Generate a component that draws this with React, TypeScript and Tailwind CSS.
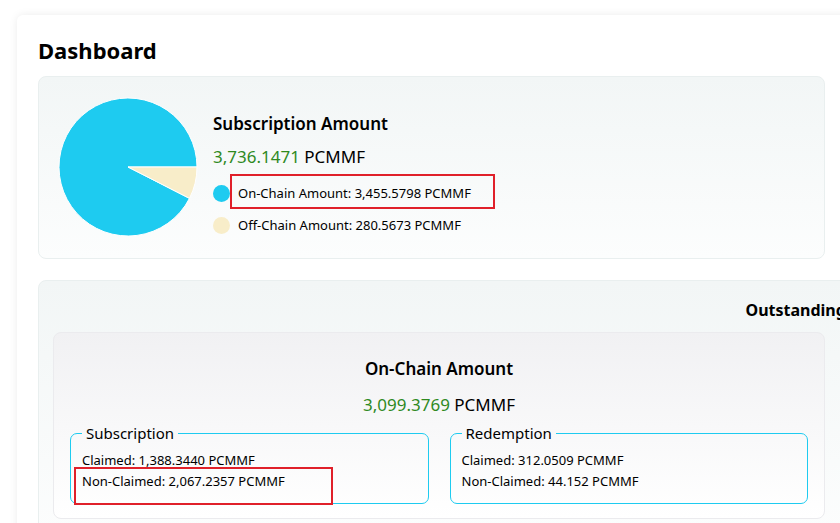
import React from "react";

const font = { fontFamily: '"Noto Sans", "Open Sans", sans-serif' };

function Pie() {
  // on-chain vs off-chain, slice starts at 3 o'clock going clockwise
  const cx = 70;
  const cy = 70;
  const r = 69;
  const frac = 280.5673 / 3736.1471;
  const a = frac * Math.PI * 2;
  const x2 = cx + r * Math.cos(a);
  const y2 = cy + r * Math.sin(a);
  return (
    <svg width="140" height="140" viewBox="0 0 140 140" className="shrink-0">
      <path
        d={`M${cx} ${cy} L${x2} ${y2} A${r} ${r} 0 1 1 ${cx + r} ${cy} Z`}
        fill="#1ecbf0"
        stroke="#fff"
        strokeWidth="1"
      />
      <path
        d={`M${cx} ${cy} L${cx + r} ${cy} A${r} ${r} 0 0 1 ${x2} ${y2} Z`}
        fill="#f8edc9"
        stroke="#fff"
        strokeWidth="1"
      />
    </svg>
  );
}

function Group({ title, claimed, nonClaimed }: { title: string; claimed: string; nonClaimed: string }) {
  return (
    <fieldset className="flex-1 rounded-[7px] border border-[#1ecbf0] px-[11px] pb-[11px] pt-[7px]">
      <legend className="px-[4px] text-[15px] leading-[20px] text-black">{title}</legend>
      <div className="text-[13px] leading-[21px] text-black">Claimed: {claimed}</div>
      <div className="text-[13px] leading-[21px] text-black">Non-Claimed: {nonClaimed}</div>
    </fieldset>
  );
}

function ChainCard({ title, total, sub, red }: { title: string; total: string; sub: [string, string]; red: [string, string] }) {
  return (
    <div className="w-[772px] shrink-0 rounded-[8px] border border-[#ebebee] bg-gradient-to-b from-[#f1f1f3] to-[#ffffff] px-[16px] pt-[24px] pb-[14px]">
      <div className="text-center text-[17px] font-semibold leading-[24px] text-black">{title}</div>
      <div className="mt-[12px] text-center text-[17px] leading-[24px]">
        <span className="text-[#2f8a1f]">{total}</span> <span className="text-black">PCMMF</span>
      </div>
      <div className="mt-[6px] flex gap-[21px]">
        <Group title="Subscription" claimed={sub[0]} nonClaimed={sub[1]} />
        <Group title="Redemption" claimed={red[0]} nonClaimed={red[1]} />
      </div>
    </div>
  );
}

export default function App() {
  return (
    <div className="h-[523px] w-[840px] overflow-hidden bg-white" style={font}>
      <div className="relative ml-[17px] mt-[15px] w-[1640px] rounded-[6px] bg-white px-[21px] pt-[20px] pb-[40px] shadow-[0_0_8px_rgba(0,0,0,0.08)]">
        <h1 className="text-[22px] font-bold leading-[30px] text-black">Dashboard</h1>

        <div className="mt-[11px] flex w-[787px] items-start gap-[15px] rounded-[8px] border border-[#e9efef] bg-gradient-to-b from-[#f2f6f6] to-[#fcfdfd] pt-[20px] pb-[21px] pl-[19px]">
          <Pie />
          <div className="flex h-[140px] flex-col pt-[15px]">
            <div className="text-[17px] font-semibold leading-[24px] text-black">Subscription Amount</div>
            <div className="mt-[9px] text-[17px] leading-[24px]">
              <span className="text-[#2f8a1f]">3,736.1471</span> <span className="text-black">PCMMF</span>
            </div>
            <div className="mt-[8px] flex items-center gap-[8px] text-[13px] leading-[32px] text-black">
              <span className="h-[17px] w-[17px] rounded-full bg-[#1ecbf0]" />
              On-Chain Amount: 3,455.5798 PCMMF
            </div>
            <div className="flex items-center gap-[8px] text-[13px] leading-[32px] text-black">
              <span className="h-[17px] w-[17px] rounded-full bg-[#f8edc9]" />
              Off-Chain Amount: 280.5673 PCMMF
            </div>
          </div>
        </div>

        <div className="mt-[21px] w-[1600px] rounded-[8px] border border-[#e9efef] bg-gradient-to-b from-[#f2f6f6] to-[#fcfdfd] px-[14px] pt-[14px] pb-[16px]">
          <div className="pr-[16px] text-center text-[16px] font-bold leading-[30px] text-black">Outstanding Amount</div>
          <div className="mt-[7px] flex gap-[26px]">
            <ChainCard
              title="On-Chain Amount"
              total="3,099.3769"
              sub={["1,388.3440 PCMMF", "2,067.2357 PCMMF"]}
              red={["312.0509 PCMMF", "44.152 PCMMF"]}
            />
            <ChainCard
              title="Off-Chain Amount"
              total="280.5673"
              sub={["0.0000 PCMMF", "0.0000 PCMMF"]}
              red={["0.0000 PCMMF", "0.0000 PCMMF"]}
            />
          </div>
        </div>

        {/* annotation boxes */}
        <div className="absolute left-[213px] top-[159px] h-[35px] w-[265px] border-2 border-[#e0202a]" />
        <div className="absolute left-[57px] top-[452px] h-[38px] w-[259px] border-2 border-[#e0202a]" />
      </div>
    </div>
  );
}
